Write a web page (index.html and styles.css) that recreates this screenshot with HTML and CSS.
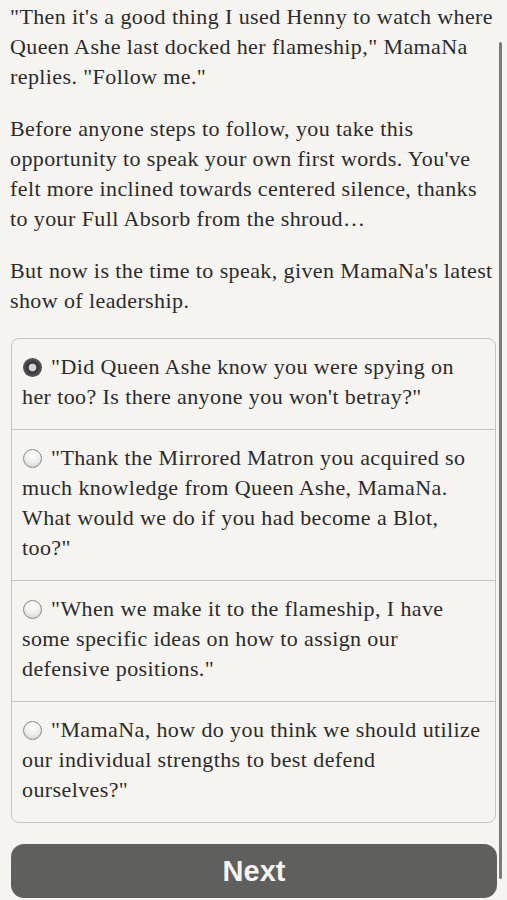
FILE: index.html
```html
<!DOCTYPE html>
<html>
<head>
<meta charset="utf-8">
<link rel="stylesheet" href="styles.css">
</head>
<body>
<div class="page">
  <main class="story">
    <p>"Then it's a good thing I used Henny to watch where Queen Ashe last docked her flameship," MamaNa replies. "Follow me."</p>
    <p>Before anyone steps to follow, you take this opportunity to speak your own first words. You've felt more inclined towards centered silence, thanks to your Full Absorb from the shroud…</p>
    <p>But now is the time to speak, given MamaNa's latest show of leadership.</p>
    <div class="choices">
      <label class="choice"><span class="radio checked"></span>"Did Queen Ashe know you were spying on her too? Is there anyone you won't betray?"</label>
      <label class="choice"><span class="radio"></span>"Thank the Mirrored Matron you acquired so much knowledge from Queen Ashe, MamaNa. What would we do if you had become a Blot, too?"</label>
      <label class="choice"><span class="radio"></span>"When we make it to the flameship, I have some specific ideas on how to assign our defensive positions."</label>
      <label class="choice"><span class="radio"></span>"MamaNa, how do you think we should utilize our individual strengths to best defend ourselves?"</label>
    </div>
    <button class="next">Next</button>
  </main>
  <div class="scrollbar"></div>
</div>
</body>
</html>
```

FILE: styles.css
```css
html, body {
  margin: 0;
  padding: 0;
  background: #f6f4f0;
}
.page {
  position: relative;
  height: 900px;
  overflow: hidden;
}
.story {
  padding: 2px 11px 0 10px;
  font-family: "Liberation Serif", serif;
  font-size: 22px;
  letter-spacing: 0.4px;
  line-height: 30px;
  color: #2b2b2b;
}
.story p {
  margin: 0 0 22px 0;
}
.choices {
  margin-top: 18px;
  margin-left: 1px;
  border: 1px solid #c4c4c2;
  border-radius: 8px;
  overflow: hidden;
}
.choice {
  display: block;
  padding: 13px 10px 17px 10px;
  border-top: 1px solid #c4c4c2;
}
.choice:first-child {
  border-top: none;
}
.radio {
  display: inline-block;
  width: 19px;
  height: 19px;
  box-sizing: border-box;
  border-radius: 50%;
  border: 1px solid #8a8a8a;
  background: radial-gradient(circle at 50% 28%, #ffffff 0%, #efefef 50%, #cbcbcb 100%);
  vertical-align: -3px;
  margin: 0 9px 0 1px;
}
.radio.checked {
  border: none;
  background: radial-gradient(circle, #d4d4d4 0 3.5px, #3c3c3c 4.2px 6.8px, #505050 7.3px 9.5px);
}
.next {
  display: block;
  width: 486px;
  margin: 21px 0 0 1px;
  height: 54px;
  border: none;
  border-radius: 13px;
  background: #5f5f5d;
  color: #f4f4f2;
  font-family: "Liberation Sans", Arial, sans-serif;
  font-weight: bold;
  font-size: 29px;
  letter-spacing: 0;
}
.scrollbar {
  position: absolute;
  left: 499px;
  top: 42px;
  width: 3px;
  height: 837px;
  background: #7a7a78;
  border-radius: 2px;
}
```
